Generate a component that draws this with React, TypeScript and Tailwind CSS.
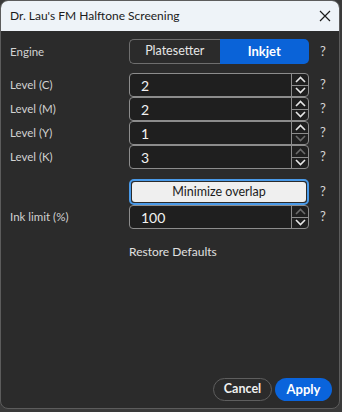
import { ReactNode } from 'react';

const font = { fontFamily: 'Lato, "Noto Sans", sans-serif' };

function Chevron({ up, disabled }: { up?: boolean; disabled?: boolean }) {
  return (
    <svg width="11" height="7" viewBox="0 0 11 7" className={disabled ? 'text-[#6b6b6b]' : 'text-[#e6e6e6]'}>
      <path
        d={up ? 'M1 6 L5.5 1.5 L10 6' : 'M1 1 L5.5 5.5 L10 1'}
        fill="none"
        stroke="currentColor"
        strokeWidth="1.6"
      />
    </svg>
  );
}

function Row({ label, children, h = 'h-[24px]' }: { label?: string; children: ReactNode; h?: string }) {
  return (
    <div className={`grid grid-cols-[119px_180px_1fr] items-center ${h}`}>
      <div className="text-[11.5px] text-[#d2d2d2]">{label}</div>
      {children}
      <div className="pl-[11px] text-[13px] text-[#d6d6d6]">?</div>
    </div>
  );
}

function Spin({ value, upOff, downOff }: { value: string; upOff?: boolean; downOff?: boolean }) {
  return (
    <div className="flex h-[24px] rounded-[4px] border border-[#8c8c8c] bg-[#1f1f1f]">
      <div className="flex flex-1 items-center pl-[11px] text-[14px] text-[#f2f2f2]">{value}</div>
      <div className="flex w-[17px] flex-col border-l border-[#8c8c8c]">
        <div className="flex flex-1 items-center justify-center border-b border-[#8c8c8c]">
          <Chevron up disabled={upOff} />
        </div>
        <div className="flex flex-1 items-center justify-center">
          <Chevron disabled={downOff} />
        </div>
      </div>
    </div>
  );
}

export default function App() {
  return (
    <div className="h-[412px] w-[342px] bg-[#3a3a3a]" style={font}>
      <div className="flex h-[409px] w-[340px] flex-col overflow-hidden rounded-[8px] border border-[#5c5c5c] bg-[#2b2b2b]">
        {/* title bar */}
        <div className="flex h-[30px] shrink-0 items-center justify-between bg-[#eef3f8] pl-[9px] pr-[8px]">
          <span className="text-[12px] text-[#1b1b1b]">Dr. Lau's FM Halftone Screening</span>
          <svg width="12" height="12" viewBox="0 0 12 12">
            <path d="M1 1 L11 11 M11 1 L1 11" stroke="#1b1b1b" strokeWidth="1.2" />
          </svg>
        </div>

        <div className="flex flex-1 flex-col px-[9px]">
          <div className="mt-[8px]">
            <Row label="Engine" h="h-[25px]">
              <div className="flex h-[25px]">
                <div className="flex flex-1 items-center justify-center rounded-l-[5px] border border-r-0 border-[#6e6e6e] text-[12.5px] text-[#e6e6e6]">
                  Platesetter
                </div>
                <div className="flex flex-1 items-center justify-center rounded-r-[5px] bg-[#0a63d8] text-[13px] font-bold text-white">
                  Inkjet
                </div>
              </div>
            </Row>
          </div>

          <div className="mt-[9px] flex flex-col">
            <Row label="Level (C)">
              <Spin value="2" />
            </Row>
            <Row label="Level (M)">
              <Spin value="2" />
            </Row>
            <Row label="Level (Y)">
              <Spin value="1" downOff />
            </Row>
            <Row label="Level (K)">
              <Spin value="3" upOff />
            </Row>
          </div>

          <div className="mt-[10px] flex flex-col">
            <Row h="h-[26px]">
              <div className="h-[26px] rounded-[5px] border-2 border-[#4a9ae8] p-px">
                <div className="flex h-full items-center justify-center rounded-[3px] bg-[#efefef] text-[12.5px] text-[#1b1b1b]">
                  Minimize overlap
                </div>
              </div>
            </Row>
            <Row label="Ink limit (%)">
              <Spin value="100" upOff />
            </Row>
          </div>

          <div className="mt-[14px] pl-[119px] text-[12px] text-[#e0e0e0]">Restore Defaults</div>

          <div className="mt-auto mb-[7px] mr-[-2px] flex justify-end gap-[3px]">
            <button className="h-[23px] w-[59px] rounded-full border border-[#5e5e5e] text-[12.5px] font-bold text-[#f0f0f0]">
              Cancel
            </button>
            <button className="h-[23px] w-[57px] rounded-full bg-[#0a64dc] text-[13px] font-bold text-white">
              Apply
            </button>
          </div>
        </div>
      </div>
    </div>
  );
}
